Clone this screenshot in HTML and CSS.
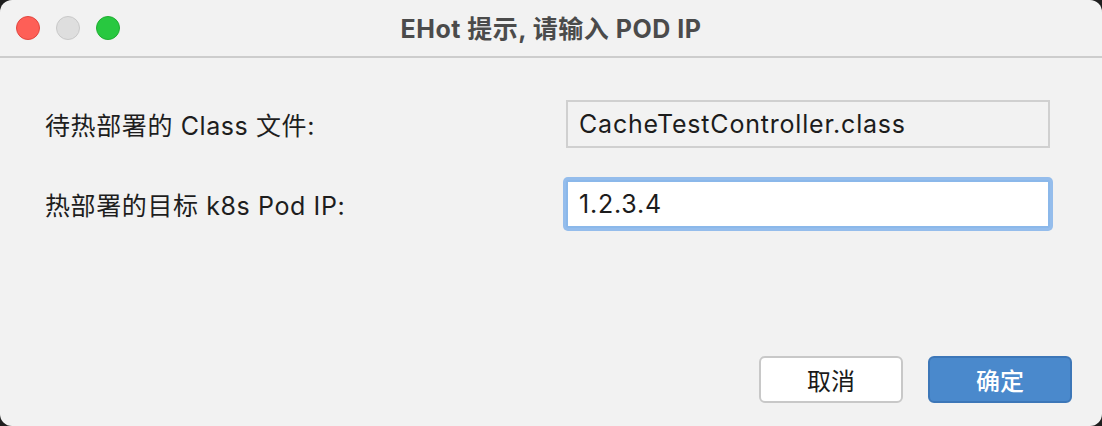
FILE: index.html
```html
<!DOCTYPE html>
<html lang="zh">
<head>
<meta charset="utf-8">
<title>EHot</title>
<link rel="stylesheet" href="styles.css">
</head>
<body>
<div class="window">
  <div class="titlebar">
    <div class="lights">
      <span class="light red"></span>
      <span class="light gray"></span>
      <span class="light green"></span>
    </div>
    <div class="title">EHot 提示, 请输入 POD IP</div>
  </div>
  <div class="content">
    <div class="form">
      <label class="label">待热部署的 Class 文件:</label>
      <div class="field readonly">CacheTestController.class</div>
      <label class="label">热部署的目标 k8s Pod IP:</label>
      <div class="field focused">1.2.3.4</div>
    </div>
  </div>
  <div class="footer">
    <button class="btn">取消</button>
    <button class="btn primary">确定</button>
  </div>
</div>
</body>
</html>
```
FILE: styles.css
```css
* { box-sizing: border-box; }
html, body { margin: 0; padding: 0; }
body {
  width: 1102px;
  height: 426px;
  background: #1f1f1f;
  font-family: "Inter", "Noto Sans CJK SC", sans-serif;
  overflow: hidden;
}
.window {
  width: 1102px;
  height: 426px;
  background: #f2f2f2;
  border-radius: 12px;
  display: flex;
  flex-direction: column;
  overflow: hidden;
}
.titlebar {
  position: relative;
  height: 58px;
  flex: none;
  border-bottom: 2px solid #cdcdcd;
  display: flex;
  align-items: center;
  justify-content: center;
}
.lights {
  position: absolute;
  left: 16px;
  top: 16px;
  display: flex;
  gap: 16px;
}
.light {
  width: 24px;
  height: 24px;
  border-radius: 50%;
  display: block;
}
.red { background: #fe5f57; border: 1px solid #e2463f; }
.gray { background: #dedede; border: 1px solid #c9c9c9; }
.green { background: #28c840; border: 1px solid #1fae31; }
.title {
  font-size: 25px;
  font-weight: 700;
  color: #4b4b4b;
  margin-top: -2px;
  letter-spacing: 0.5px;
}
.content {
  flex: 1;
  padding: 42px 52px 0 45px;
}
.form {
  display: grid;
  grid-template-columns: 521px 484px;
  row-gap: 32px;
  align-items: center;
}
.label {
  font-size: 25px;
  letter-spacing: 0.6px;
  color: #1e1e1e;
}
.field {
  height: 48px;
  font-size: 25px;
  letter-spacing: 0.8px;
  color: #1c1c1c;
  display: flex;
  align-items: center;
  padding-left: 11px;
}
.readonly {
  border: 2px solid #d0d0d0;
  background: #f2f2f2;
}
.focused {
  background: #ffffff;
  border: 2px solid #8bb8ea;
  box-shadow: 0 0 0 3px #95bdec;
  border-radius: 2px;
}
.footer {
  display: flex;
  justify-content: flex-end;
  gap: 25px;
  padding: 0 30px 23px 0;
}
.btn {
  width: 144px;
  height: 47px;
  border-radius: 6px;
  font-family: "Noto Sans CJK SC", sans-serif;
  font-size: 24px;
  color: #1a1a1a;
  background: #ffffff;
  border: 2px solid #c8c8c8;
  padding: 0;
}
.btn.primary {
  background: #4a89cc;
  border-color: #3d77b8;
  color: #ffffff;
  font-weight: 500;
}
```
